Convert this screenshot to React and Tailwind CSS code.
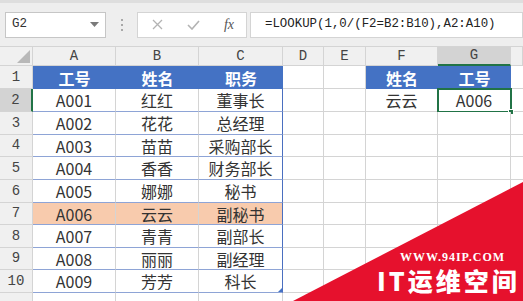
import React from "react";

const mono = { fontFamily: '"Liberation Mono", "DejaVu Sans Mono", monospace' };
const cjk = { fontFamily: '"Noto Sans CJK SC", "Noto Sans", sans-serif' };

const colW = ["w-[33px]", "w-[83px]", "w-[83px]", "w-[84px]", "w-[41px]", "w-[42px]", "w-[72px]", "w-[73px]", "flex-1"];
const letters = ["A", "B", "C", "D", "E", "F", "G", ""];

const rows = [
  { h: "h-[23px]", a: ["工号", "姓名", "职务"], f: ["姓名", "工号"] },
  { h: "h-[23px]", a: ["A001", "红红", "董事长"], f: ["云云", "A006"] },
  { h: "h-[23px]", a: ["A002", "花花", "总经理"] },
  { h: "h-[22px]", a: ["A003", "苗苗", "采购部长"] },
  { h: "h-[23px]", a: ["A004", "香香", "财务部长"] },
  { h: "h-[23px]", a: ["A005", "娜娜", "秘书"] },
  { h: "h-[22px]", a: ["A006", "云云", "副秘书"], hot: true },
  { h: "h-[23px]", a: ["A007", "青青", "副部长"] },
  { h: "h-[22px]", a: ["A008", "丽丽", "副经理"] },
  { h: "h-[23px]", a: ["A009", "芳芳", "科长"] },
  { h: "h-[10px]", a: ["", "", ""], extra: true },
];

const Toolbar = () => (
  <div className="h-[46px] flex items-center bg-[#eeeeee] border-t-[3px] border-[#dedede]">
    <div className="ml-[5px] w-[101px] h-[26px] bg-white border border-[#c6c6c6] flex items-center justify-between px-[6px]">
      <span className="text-[12.5px] text-[#333]" style={mono}>G2</span>
      <svg width="9" height="6" viewBox="0 0 9 6"><polygon points="0,0 9,0 4.5,5" fill="#7a7a7a" /></svg>
    </div>
    <div className="w-[31px] flex flex-col items-center gap-[3px]">
      <span className="w-[2px] h-[2px] bg-[#a8a8a8]" />
      <span className="w-[2px] h-[2px] bg-[#a8a8a8]" />
      <span className="w-[2px] h-[2px] bg-[#a8a8a8]" />
    </div>
    <div className="w-[110px] h-[26px] bg-white border border-[#d4d4d4] flex items-center justify-between pl-[14px] pr-[12px]">
      <svg width="11" height="11" viewBox="0 0 11 11"><path d="M1 1 L10 10 M10 1 L1 10" stroke="#b3b3b3" strokeWidth="1.3" /></svg>
      <svg width="13" height="10" viewBox="0 0 13 10"><path d="M1 5 L5 9 L12 1" stroke="#b3b3b3" strokeWidth="1.6" fill="none" /></svg>
      <span className="italic text-[14px] text-[#555] leading-none" style={{ fontFamily: '"Liberation Serif", serif' }}>fx</span>
    </div>
    <div className="ml-[3px] flex-1 h-[26px] bg-white border border-[#d4d4d4] flex items-center pl-[14px]">
      <span className="text-[12.4px] text-[#222] whitespace-nowrap" style={mono}>=LOOKUP(1,0/(F2=B2:B10),A2:A10)</span>
    </div>
  </div>
);

const HeaderRow = () => (
  <div className="flex h-[20px] bg-[#f0f0f0] border-t border-[#d4d4d4]">
    <div className={`${colW[0]} relative border-r border-b border-[#d4d4d4]`}>
      <svg className="absolute right-[2px] bottom-[2px]" width="13" height="13" viewBox="0 0 13 13"><polygon points="13,0 13,13 0,13" fill="#b8b8b8" /></svg>
    </div>
    {letters.map((l, i) => (
      <div
        key={i}
        className={`${colW[i + 1]} flex items-center justify-center text-[14px] text-[#444] border-r border-[#d4d4d4] ${
          l === "G" ? "bg-[#d3d3d3] border-b-2 border-b-[#217346]" : "border-b"
        }`}
        style={mono}
      >
        {l}
      </div>
    ))}
  </div>
);

const Row = ({ row, n }) => {
  const isHead = n === 1;
  const sel = n === 2;
  const dataCls = (i) => {
    if (row.extra) return "border-r border-[#d4d4d4]";
    if (isHead) return "bg-[#4472c4] text-white font-bold";
    const right = i === 2 ? "border-r border-r-[#4a6fc0]" : "border-r border-r-[#d4d4d4]";
    return `${row.hot ? "bg-[#f8cbad]" : "bg-white"} text-[#333] border-b border-b-[#8ea4d6] ${right}`;
  };
  return (
    <div className={`flex ${row.h}`}>
      <div
        className={`${colW[0]} flex items-center justify-center text-[14px] text-[#444] border-b border-[#d4d4d4] ${
          sel ? "bg-[#d3d3d3] border-r-2 border-r-[#217346]" : "bg-[#f0f0f0] border-r"
        }`}
        style={mono}
      >
        {row.extra ? "" : n}
      </div>
      {row.a.map((t, i) => (
        <div key={i} className={`${colW[i + 1]} relative flex items-center justify-center text-[16px] ${dataCls(i)}`} style={cjk}>
          {t}
          {n === 10 && i === 2 && (
            <svg className="absolute right-0 bottom-0" width="4" height="4" viewBox="0 0 4 4"><polygon points="4,0 4,4 0,4" fill="#4472c4" /></svg>
          )}
        </div>
      ))}
      <div className={`${colW[4]} border-r border-b border-[#d4d4d4] bg-white`} />
      <div className={`${colW[5]} border-r border-b border-[#d4d4d4] bg-white`} />
      {[0, 1].map((i) => {
        const t = row.f ? row.f[i] : "";
        return (
          <div
            key={i}
            className={`${colW[6 + i]} relative flex items-center justify-center text-[16px] ${
              isHead ? "bg-[#4472c4] text-white font-bold" : "bg-white text-[#333] border-r border-b border-[#d4d4d4]"
            }`}
            style={cjk}
          >
            {t}
            {sel && i === 1 && (
              <div className="absolute left-[-1px] top-[-1px] w-[75px] h-[25px] border-2 border-[#217346]">
                <div className="absolute right-[-4px] bottom-[-4px] w-[6px] h-[6px] bg-[#217346] border border-white" />
              </div>
            )}
          </div>
        );
      })}
      <div className="flex-1 border-b border-[#d4d4d4] bg-white" />
    </div>
  );
};

export default function App() {
  return (
    <div className="relative w-[523px] h-[301px] overflow-hidden bg-white">
      <Toolbar />
      <HeaderRow />
      {rows.map((r, i) => (
        <Row key={i} row={r} n={i + 1} />
      ))}
      <svg className="absolute left-0 top-0" width="523" height="301" viewBox="0 0 523 301">
        <polygon points="293,301 523,182 523,301" fill="#e6112d" />
      </svg>
      <div
        className="absolute left-[400px] top-[251px] text-white font-bold text-[12px] tracking-[1px] leading-none whitespace-nowrap"
        style={{ fontFamily: '"Liberation Serif", serif' }}
      >
        WWW.94IP.COM
      </div>
      <div
        className="absolute left-[377px] top-[268px] text-white font-black text-[25px] tracking-[3px] leading-none whitespace-nowrap"
        style={cjk}
      >
        IT运维空间
      </div>
    </div>
  );
}
